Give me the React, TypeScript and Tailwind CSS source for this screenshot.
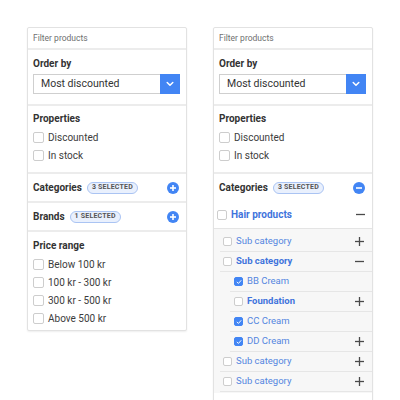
import React from 'react'

const BLUE = '#4285f4'

function Box({ checked = false, size = 11 }: { checked?: boolean; size?: number }) {
  return (
    <span
      className={
        'shrink-0 flex items-center justify-center rounded-[2px] border ' +
        (checked ? 'bg-[#4285f4] border-[#4285f4]' : 'bg-white border-[#cdcdcd]')
      }
      style={{ width: size, height: size }}
    >
      {checked && (
        <svg width={size - 3} height={size - 3} viewBox="0 0 10 10">
          <path d="M1.8 5.2 L4 7.4 L8.3 2.6" fill="none" stroke="white" strokeWidth="1.6" strokeLinecap="round" strokeLinejoin="round" />
        </svg>
      )}
    </span>
  )
}

function Sep() {
  return <div className="h-[2px] bg-[#ececec]" />
}

function CircleIcon({ minus = false }: { minus?: boolean }) {
  return (
    <svg width="12" height="12" viewBox="0 0 12 12" className="shrink-0">
      <circle cx="6" cy="6" r="6" fill={BLUE} />
      <path d="M3 6 H9" stroke="white" strokeWidth="1.6" />
      {!minus && <path d="M6 3 V9" stroke="white" strokeWidth="1.6" />}
    </svg>
  )
}

function PlusMinus({ minus = false }: { minus?: boolean }) {
  return (
    <svg width="9" height="9" viewBox="0 0 9 9" className="shrink-0">
      <path d="M0 4.5 H9" stroke="#4a4a4a" strokeWidth="1.3" />
      {!minus && <path d="M4.5 0 V9" stroke="#4a4a4a" strokeWidth="1.3" />}
    </svg>
  )
}

function Badge({ text }: { text: string }) {
  return (
    <span className="ml-[5px] h-[12px] px-[4px] flex items-center rounded-full border border-[#aac4f3] bg-[#e9f0fd] text-[7px] font-bold leading-none tracking-[0.2px] text-[#555]">
      {text}
    </span>
  )
}

function CheckList({ title, items }: { title: string; items: string[] }) {
  return (
    <div>
      <div className="text-[10px] font-bold leading-[14px] text-[#333]">{title}</div>
      <div className="mt-[2px]">
        {items.map(i => (
          <div key={i} className="h-[18px] flex items-center gap-[4px]">
            <Box />
            <span className="text-[10px] text-[#3c3c3c]">{i}</span>
          </div>
        ))}
      </div>
    </div>
  )
}

function Collapsed({ title, badge, open = false }: { title: string; badge: string; open?: boolean }) {
  return (
    <div className="h-[27px] flex items-center pl-[5px] pr-[7px]">
      <span className="text-[10px] font-bold text-[#333]">{title}</span>
      <Badge text={badge} />
      <span className="ml-auto"><CircleIcon minus={open} /></span>
    </div>
  )
}

type Row = { label: string; level: 0 | 1; bold?: boolean; checked?: boolean; icon?: 'plus' | 'minus' }

const tree: Row[] = [
  { label: 'Sub category', level: 0, icon: 'plus' },
  { label: 'Sub category', level: 0, bold: true, icon: 'minus' },
  { label: 'BB Cream', level: 1, checked: true },
  { label: 'Foundation', level: 1, bold: true, icon: 'plus' },
  { label: 'CC Cream', level: 1, checked: true },
  { label: 'DD Cream', level: 1, checked: true, icon: 'plus' },
  { label: 'Sub category', level: 0, icon: 'plus' },
  { label: 'Sub category', level: 0, icon: 'plus' },
]

function Tree() {
  return (
    <div>
      <div className="h-[27px] flex items-center pl-[3px] pr-[7px]">
        <Box size={10} />
        <span className="ml-[4px] text-[10px] font-bold text-[#3f74dc]">Hair products</span>
        <span className="ml-auto"><PlusMinus minus /></span>
      </div>
      <div className="bg-[#f7f7f7] border-t border-[#e4e4e4] pt-[3px] pb-[1px]">
        {tree.map((r, i) => (
          <div
            key={i}
            className={
              'h-[20px] flex items-center border-b border-[#e6e6e6] pr-[8px] ' +
              (r.level === 0 ? 'ml-[6px] pl-[3px] gap-[4px]' : 'ml-[16px] pl-[4px] gap-[4px]')
            }
          >
            <Box size={9} checked={r.checked} />
            <span className={'text-[9.5px] ' + (r.bold ? 'font-bold text-[#3f74dc]' : 'text-[#5486e0]')}>{r.label}</span>
            {r.icon && <span className="ml-auto"><PlusMinus minus={r.icon === 'minus'} /></span>}
          </div>
        ))}
      </div>
    </div>
  )
}

function Panel({ open }: { open: boolean }) {
  return (
    <div className="w-[160px] bg-white border border-[#e2e2e2] rounded-[2px] shadow-[0_1px_2px_rgba(0,0,0,0.07)]">
      <div className="h-[20px] flex items-center px-[5px] text-[8.5px] text-[#6f6f6f]">Filter products</div>
      <Sep />
      <div className="pl-[5px] pr-[6px] pt-[7px] pb-[10px]">
        <div className="text-[10px] font-bold leading-[14px] text-[#333]">Order by</div>
        <div className="mt-[3px] flex h-[20px]">
          <div className="flex-1 flex items-center pl-[7px] border border-r-0 border-[#cfcfcf] text-[10.5px] text-[#333]">
            Most discounted
          </div>
          <div className="w-[20px] h-[20px] bg-[#4285f4] flex items-center justify-center">
            <svg width="8" height="6" viewBox="0 0 8 6">
              <path d="M1.2 1.5 L4 4.3 L6.8 1.5" fill="none" stroke="white" strokeWidth="1.5" strokeLinecap="round" strokeLinejoin="round" />
            </svg>
          </div>
        </div>
      </div>
      <Sep />
      <div className="px-[5px] pt-[6px] pb-[8px]">
        <CheckList title="Properties" items={['Discounted', 'In stock']} />
      </div>
      <Sep />
      <Collapsed title="Categories" badge="3 SELECTED" open={open} />
      {open ? (
        <>
          <Tree />
          <div className="h-[16px]" />
        </>
      ) : (
        <>
          <Sep />
          <Collapsed title="Brands" badge="1 SELECTED" />
          <Sep />
          <div className="px-[5px] pt-[7px] pb-[3px]">
            <CheckList title="Price range" items={['Below 100 kr', '100 kr - 300 kr', '300 kr - 500 kr', 'Above 500 kr']} />
          </div>
        </>
      )}
    </div>
  )
}

export default function App() {
  return (
    <div className="h-[400px] overflow-hidden bg-white font-['Roboto',sans-serif]">
      <div className="flex items-start gap-[26px] pl-[27px] pt-[27px]">
        <Panel open={false} />
        <Panel open />
      </div>
    </div>
  )
}
